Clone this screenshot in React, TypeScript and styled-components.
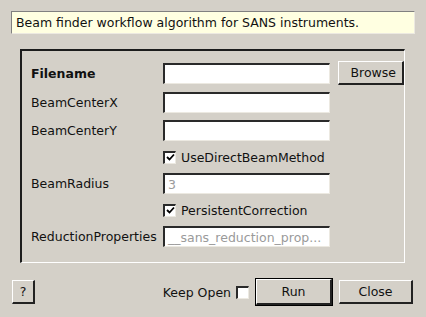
import styled, { createGlobalStyle } from "styled-components"

const GlobalStyle = createGlobalStyle`
  html, body {
    margin: 0;
    padding: 0;
    background: #d4d0c8;
  }
  body {
    font-family: "DejaVu Sans", "Liberation Sans", sans-serif;
    font-size: 12.5px;
    color: #111;
  }
`

const Dialog = styled.div`
  width: 426px;
  height: 317px;
  box-sizing: border-box;
  padding: 11px 11px 0 11px;
  display: flex;
  flex-direction: column;
`

const Description = styled.div`
  height: 23px;
  width: 404px;
  box-sizing: border-box;
  background: #ffffe1;
  border-top: 1px solid #808080;
  border-left: 1px solid #808080;
  border-right: 1px solid #ece9e1;
  border-bottom: 1px solid #ece9e1;
  padding-left: 4px;
  display: flex;
  align-items: center;
`

const Group = styled.div`
  margin: 15px 0 0 9px;
  width: 385px;
  height: 214px;
  box-sizing: border-box;
  border-top: 2px solid #1c1c1c;
  border-left: 2px solid #1c1c1c;
  border-right: 1px solid #ffffff;
  border-bottom: 1px solid #ffffff;
  padding: 10px 0 0 9px;
  display: grid;
  grid-template-columns: 124px 167px 66px;
  column-gap: 8px;
  row-gap: 7px;
  grid-auto-rows: min-content;
  align-items: center;
`

const Label = styled.div<{ $bold?: boolean }>`
  font-weight: ${p => (p.$bold ? "bold" : "normal")};
  white-space: nowrap;
  grid-column: 1;
`

const Field = styled.div`
  grid-column: 2;
  height: 21px;
  box-sizing: border-box;
  background: #fff;
  border-top: 2px solid #2a2a2a;
  border-left: 2px solid #2a2a2a;
  border-right: 1px solid #ece9e1;
  border-bottom: 1px solid #ece9e1;
  padding-left: 3px;
  color: #9a9a9a;
  display: flex;
  align-items: center;
  overflow: hidden;
  white-space: nowrap;
`

const CheckRow = styled.label`
  grid-column: 2 / span 2;
  height: 18px;
  display: flex;
  align-items: center;
  gap: 5px;
`

const Box = styled.span`
  width: 13px;
  height: 13px;
  box-sizing: border-box;
  background: #fff;
  border-top: 2px solid #2a2a2a;
  border-left: 2px solid #2a2a2a;
  border-right: 1px solid #ece9e1;
  border-bottom: 1px solid #ece9e1;
  display: inline-flex;
  align-items: center;
  justify-content: center;
  flex: none;
`

const Button = styled.button<{ $w: number; $default?: boolean }>`
  width: ${p => p.$w}px;
  height: ${p => (p.$default ? 26 : 24)}px;
  box-sizing: border-box;
  font-family: inherit;
  font-size: 12.5px;
  color: #111;
  background: #d4d0c8;
  padding: 0;
  border-top: 1px solid #fff;
  border-left: 1px solid #fff;
  border-right: 2px solid #222;
  border-bottom: 2px solid #222;
  box-shadow: ${p => (p.$default ? "0 0 0 1px #000" : "none")};
  ${p => (p.$default ? "margin: 0 1px;" : "")}
`

const BrowseButton = styled(Button)`
  grid-column: 3;
  justify-self: start;
  text-align: right;
  padding-right: 6px;
`

const Footer = styled.div`
  margin-top: 16px;
  margin-left: 1px;
  display: flex;
  align-items: center;
  height: 26px;
`

const Spacer = styled.div`
  flex: 1;
`

const KeepOpen = styled.label`
  display: flex;
  align-items: center;
  gap: 5px;
  margin-right: 6px;
`

const FooterGap = styled.div<{ $w: number }>`
  width: ${p => p.$w}px;
`

function Check({ on }: { on: boolean }) {
  return (
    <Box>
      {on && (
        <svg width="9" height="9" viewBox="0 0 9 9">
          <path d="M1 4 L3.5 6.5 L8 1.5" stroke="#000" strokeWidth="1.8" fill="none" />
        </svg>
      )}
    </Box>
  )
}

export default function App() {
  return (
    <>
      <GlobalStyle />
      <Dialog>
        <Description>Beam finder workflow algorithm for SANS instruments.</Description>
        <Group>
          <Label $bold>Filename</Label>
          <Field />
          <BrowseButton $w={66}>Browse</BrowseButton>

          <Label>BeamCenterX</Label>
          <Field />
          <div />

          <Label>BeamCenterY</Label>
          <Field />
          <div />

          <CheckRow>
            <Check on />
            UseDirectBeamMethod
          </CheckRow>

          <Label>BeamRadius</Label>
          <Field>3</Field>
          <div />

          <CheckRow>
            <Check on />
            PersistentCorrection
          </CheckRow>

          <Label>ReductionProperties</Label>
          <Field>__sans_reduction_prop...</Field>
          <div />
        </Group>
        <Footer>
          <Button $w={23}>?</Button>
          <Spacer />
          <KeepOpen>
            Keep Open
            <Check on={false} />
          </KeepOpen>
          <Button $w={76} $default>Run</Button>
          <FooterGap $w={6} />
          <Button $w={74}>Close</Button>
          <FooterGap $w={2} />
        </Footer>
      </Dialog>
    </>
  )
}
